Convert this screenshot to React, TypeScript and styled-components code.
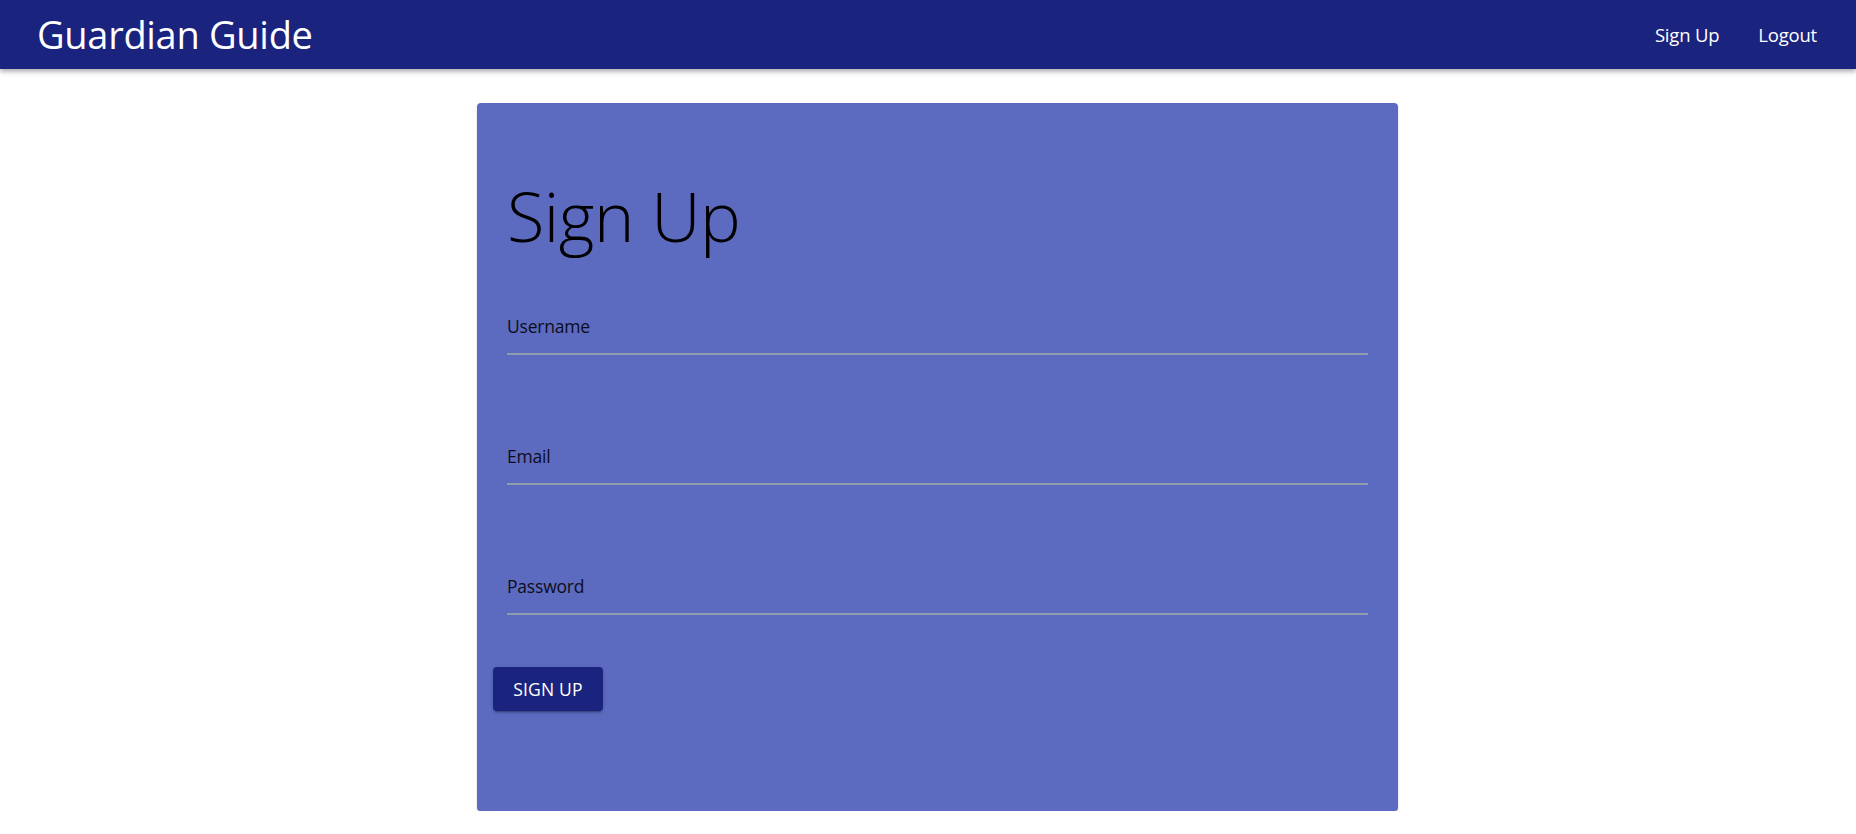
import React from 'react';
import styled, { createGlobalStyle } from 'styled-components';

const GlobalStyle = createGlobalStyle`
  html, body {
    margin: 0;
    padding: 0;
    background: #ffffff;
    font-family: "Open Sans", "Noto Sans", "Liberation Sans", sans-serif;
  }
`;

const Colours = {
  Navy: '#1a237e',
  Indigo: '#5c6bc0',
  Underline: '#8f9cab',
  White: '#ffffff',
  Ink: '#0d0d1a',
};

const AppBar = styled.header`
  height: 69px;
  background: ${Colours.Navy};
  display: flex;
  align-items: center;
  justify-content: space-between;
  padding: 0 28px 0 37px;
  box-shadow: 0 2px 4px rgba(0, 0, 0, 0.25), 0 4px 5px rgba(0, 0, 0, 0.1);
  position: relative;
  z-index: 1;
`;

const Brand = styled.div`
  color: ${Colours.White};
  font-size: 38px;
  font-weight: 400;
  letter-spacing: -0.3px;
  line-height: 1;
  margin-top: -2px;
`;

const Nav = styled.nav`
  display: flex;
  align-items: center;
  gap: 17px;
`;

const NavLink = styled.a`
  color: ${Colours.White};
  font-size: 18.5px;
  padding: 6px 11px;
  text-decoration: none;
  letter-spacing: -0.2px;
  cursor: pointer;
`;

const Main = styled.main`
  display: flex;
  justify-content: center;
  padding: 34px 0 0 19px;
`;

const Card = styled.section`
  width: 921px;
  height: 708px;
  box-sizing: border-box;
  background: ${Colours.Indigo};
  border-radius: 4px;
  box-shadow: 0 2px 1px -1px rgba(0, 0, 0, 0.2), 0 1px 1px rgba(0, 0, 0, 0.14),
    0 1px 3px rgba(0, 0, 0, 0.12);
  padding: 68px 30px 0 30px;
`;

const Title = styled.h1`
  margin: 0 0 53px;
  font-size: 68.5px;
  font-weight: 350;
  line-height: 90px;
  color: #000;
  letter-spacing: -0.5px;
`;

const Fields = styled.div`
  display: flex;
  flex-direction: column;
  gap: 89px;
`;

const Field = styled.label`
  display: block;
`;

const FieldLabel = styled.div`
  font-size: 17.5px;
  line-height: 24px;
  height: 39px;
  color: ${Colours.Ink};
  letter-spacing: -0.2px;
`;

const Underline = styled.div`
  height: 2px;
  background: ${Colours.Underline};
`;

const Submit = styled.button`
  margin: 52px 0 0 -14px;
  width: 110px;
  height: 44px;
  border: none;
  border-radius: 4px;
  background: ${Colours.Navy};
  color: ${Colours.White};
  font-family: inherit;
  font-size: 17.5px;
  letter-spacing: 0.2px;
  text-transform: uppercase;
  box-shadow: 0 3px 1px -2px rgba(0, 0, 0, 0.2), 0 2px 2px rgba(0, 0, 0, 0.14),
    0 1px 5px rgba(0, 0, 0, 0.12);
  cursor: pointer;
`;

const fields = ['Username', 'Email', 'Password'];

export default function App() {
  return (
    <>
      <GlobalStyle />
      <AppBar>
        <Brand>Guardian Guide</Brand>
        <Nav>
          <NavLink>Sign Up</NavLink>
          <NavLink>Logout</NavLink>
        </Nav>
      </AppBar>
      <Main>
        <Card>
          <Title>Sign Up</Title>
          <Fields>
            {fields.map(f => (
              <Field key={f}>
                <FieldLabel>{f}</FieldLabel>
                <Underline />
              </Field>
            ))}
          </Fields>
          <Submit>Sign Up</Submit>
        </Card>
      </Main>
    </>
  );
}
